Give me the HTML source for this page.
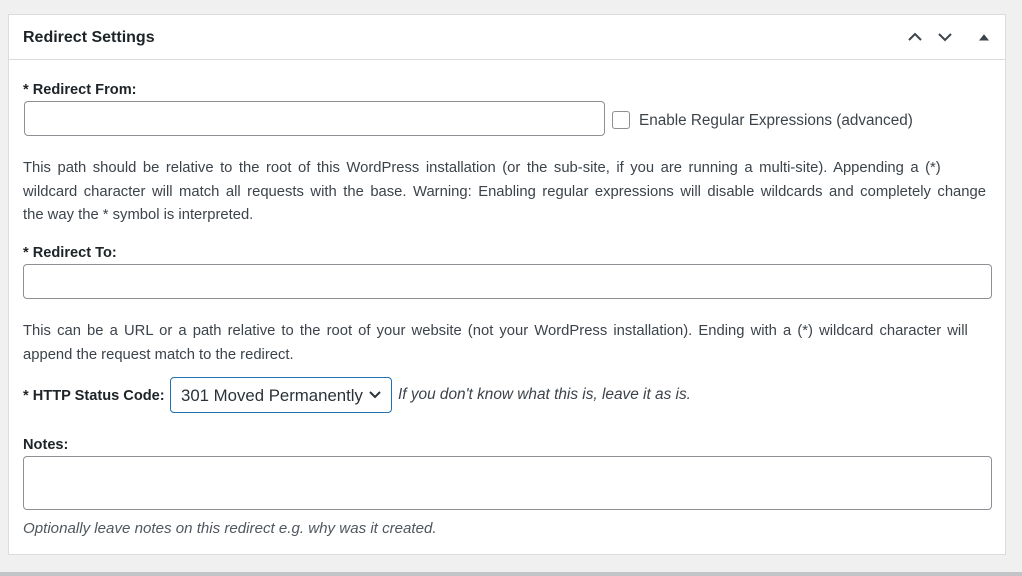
<!DOCTYPE html>
<html><head><style>
body{margin:0;width:1022px;height:576px;background:#f0f0f1;font-family:"Liberation Sans",sans-serif;color:#3c434a;overflow:hidden;position:relative}
.panel{position:absolute;left:8px;top:14px;width:998px;height:541px;background:#fff;border:1px solid #dcdcde;box-sizing:border-box}
.hdr{position:absolute;left:0;top:0;right:0;height:44px;border-bottom:1px solid #dcdcde}
.t{position:absolute;white-space:nowrap;font-size:14.6px}
.inp{position:absolute;border:1px solid #8c8f94;border-radius:4px;box-sizing:border-box;background:#fff}
b{color:#1d2327}
</style></head><body>
<div class="panel">
<div class="hdr">
<div class="t" style="left:14px;top:14px;font-size:16px;font-weight:bold;color:#1d2327">Redirect Settings</div>
<svg style="position:absolute;left:898px;top:14px" width="90" height="16" viewBox="0 0 90 16" fill="none" stroke="#3c434a" stroke-width="2"><path d="M2 11 L8 5 L14 11"/><path d="M32 5 L38 11 L44 5"/><path d="M73 11 L77 6 L81 11 Z" fill="#3c434a" stroke-width="1"/></svg>
</div>
</div>
<div class="t" style="left:23px;top:82px"><b>* Redirect From:</b></div>
<div class="inp" style="left:24px;top:101px;width:581px;height:35px"></div>
<div class="inp" style="left:612px;top:111px;width:18px;height:18px;border-radius:3px"></div>
<div class="t" style="left:639px;top:112px;font-size:15.3px">Enable Regular Expressions (advanced)</div>
<div class="t" style="left:23px;top:157px;line-height:23.5px;font-size:14.8px"><span style="word-spacing:2.4px">This path should be relative to the root of this WordPress installation (or the sub-site, if you are running a multi-site). Appending a (*)</span><br><span style="word-spacing:2.4px">wildcard character will match all requests with the base. Warning: Enabling regular expressions will disable wildcards and completely change</span><br>the way the * symbol is interpreted.</div>
<div class="t" style="left:23px;top:245px"><b>* Redirect To:</b></div>
<div class="inp" style="left:23px;top:264px;width:969px;height:35px"></div>
<div class="t" style="left:23px;top:320px;line-height:23.5px;font-size:14.8px"><span style="word-spacing:2px">This can be a URL or a path relative to the root of your website (not your WordPress installation). Ending with a (*) wildcard character will</span><br>append the request match to the redirect.</div>
<div class="t" style="left:23px;top:388px"><b>* HTTP Status Code:</b></div>
<div class="inp" style="left:170px;top:377px;width:222px;height:36px;border:1.5px solid #2271b1"></div>
<div class="t" style="left:181px;top:386px;font-size:16.8px;color:#2c3338">301 Moved Permanently</div>
<svg style="position:absolute;left:369px;top:390px" width="12" height="10" viewBox="0 0 12 10" fill="none" stroke="#2c3338" stroke-width="2"><path d="M1 2 L6 7 L11 2"/></svg>
<div class="t" style="left:398px;top:386px;font-style:italic;font-size:15.4px">If you don't know what this is, leave it as is.</div>
<div class="t" style="left:23px;top:437px"><b>Notes:</b></div>
<div class="inp" style="left:23px;top:456px;width:969px;height:54px"></div>
<div class="t" style="left:23px;top:520px;font-style:italic;color:#50575e;font-size:15.1px">Optionally leave notes on this redirect e.g. why was it created.</div>
<div style="position:absolute;left:0;top:572px;width:1022px;height:4px;background:#c3c4c7"></div>
</body></html>
